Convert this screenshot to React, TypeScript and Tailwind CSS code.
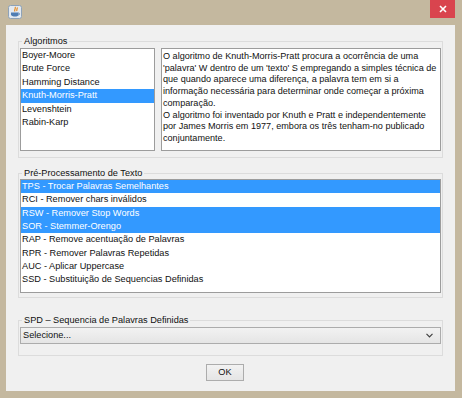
export default function App() {
  const algoritmos = ['Boyer-Moore', 'Brute Force', 'Hamming Distance', 'Knuth-Morris-Pratt', 'Levenshtein', 'Rabin-Karp'];
  const selectedAlg = 3;

  const preproc = [
    { text: 'TPS - Trocar Palavras Semelhantes', sel: true },
    { text: 'RCI - Remover chars inválidos', sel: false },
    { text: 'RSW - Remover Stop Words', sel: true },
    { text: 'SOR - Stemmer-Orengo', sel: true },
    { text: 'RAP - Remove acentuação de Palavras', sel: false },
    { text: 'RPR - Remover Palavras Repetidas', sel: false },
    { text: 'AUC - Aplicar Uppercase', sel: false },
    { text: 'SSD - Substituição de Sequencias Definidas', sel: false },
  ];

  return (
    <div className="w-[462px] h-[398px] bg-[#c4b89f] flex flex-col font-['Liberation_Sans',Arial,sans-serif] text-[9.2px] text-[#111]">
      {/* title bar */}
      <div className="h-[25px] flex items-start justify-between shrink-0">
        <div className="ml-[8px] mt-[5px]">
          <svg width="14" height="14" viewBox="0 0 14 14">
            <rect x="0.5" y="0.5" width="13" height="13" rx="2" fill="#e3e9f0" stroke="#8ea2b8" />
            <path d="M7 2 C8.5 3.5 5.5 4.5 7 6.5 M9 2.5 C10 3.5 8 4.5 9 6" stroke="#e8891c" strokeWidth="1.2" fill="none" />
            <path d="M3 7.5 H10.5 V9.5 C10.5 11 9 11.5 7 11.5 C5 11.5 3 11 3 9.5 Z" fill="#4f7db3" />
            <path d="M10.5 8 C12 8 12 10 10.3 10" stroke="#4f7db3" strokeWidth="0.8" fill="none" />
          </svg>
        </div>
        <div className="w-[25px] h-[18px] mr-[7px] bg-[#d9444e] flex items-center justify-center">
          <svg width="8" height="8" viewBox="0 0 8 8">
            <path d="M1 1 L7 7 M7 1 L1 7" stroke="#ffffff" strokeWidth="1.6" />
          </svg>
        </div>
      </div>

      {/* content */}
      <div className="ml-[6px] mr-[7px] h-[366px] bg-[#f0f0f0] px-[12px] flex flex-col">
        <fieldset className="mt-[11px] border border-[#dcdcdc] px-[1px] pb-[6px]">
          <legend className="ml-[2px] px-[2px] leading-[10px]">Algoritmos</legend>
          <div className="flex gap-[6px] mt-[2px]">
            <div className="w-[135px] h-[103px] bg-white border border-[#9c9c9c]">
              {algoritmos.map((a, i) => (
                <div
                  key={a}
                  className={`h-[13.4px] leading-[13.4px] pl-[1px] ${i === selectedAlg ? 'bg-[#3399ff] text-white' : ''}`}
                >
                  {a}
                </div>
              ))}
            </div>
            <div className="flex-1 h-[103px] bg-white border border-[#9c9c9c] pl-[1px] pt-[2px] text-[9.1px] leading-[11.7px]">
              <p>
                O algoritmo de Knuth-Morris-Pratt procura a ocorrência de uma 'palavra' W dentro de um 'texto' S empregando a
                simples técnica de que quando aparece uma diferença, a palavra tem em si a informação necessária para
                determinar onde começar a próxima comparação.
              </p>
              <p>
                O algoritmo foi inventado por Knuth e Pratt e independentemente por James Morris em 1977, embora os três
                tenham-no publicado conjuntamente.
              </p>
            </div>
          </div>
        </fieldset>

        <fieldset className="mt-[10px] border border-[#dcdcdc] px-[1px] pb-[4px]">
          <legend className="ml-[2px] px-[2px] leading-[10px]">Pré-Processamento de Texto</legend>
          <div className="mt-[1px] h-[114px] bg-white border border-[#9c9c9c]">
            {preproc.map((p) => (
              <div
                key={p.text}
                className={`h-[13.33px] leading-[13.33px] pl-[1px] ${p.sel ? 'bg-[#3399ff] text-white' : ''}`}
              >
                {p.text}
              </div>
            ))}
          </div>
        </fieldset>

        <fieldset className="mt-[17px] border border-[#dcdcdc] px-[1px] pb-[11px]">
          <legend className="ml-[2px] px-[2px] leading-[10px]">SPD – Sequencia de Palavras Definidas</legend>
          <div className="mt-[2px] h-[17px] border border-[#acacac] bg-gradient-to-b from-[#f2f2f2] to-[#e5e5e5] flex items-center justify-between pl-[2px] pr-[7px]">
            <span>Selecione...</span>
            <svg width="7" height="5" viewBox="0 0 7 5">
              <path d="M0.5 0.8 L3.5 3.8 L6.5 0.8" stroke="#404040" strokeWidth="1.2" fill="none" />
            </svg>
          </div>
        </fieldset>

        <div className="mt-[8px] pl-[188px]">
          <div className="w-[38px] h-[17px] border border-[#acacac] bg-gradient-to-b from-[#f2f2f2] to-[#e5e5e5] flex items-center justify-center">
            OK
          </div>
        </div>
      </div>
    </div>
  );
}
